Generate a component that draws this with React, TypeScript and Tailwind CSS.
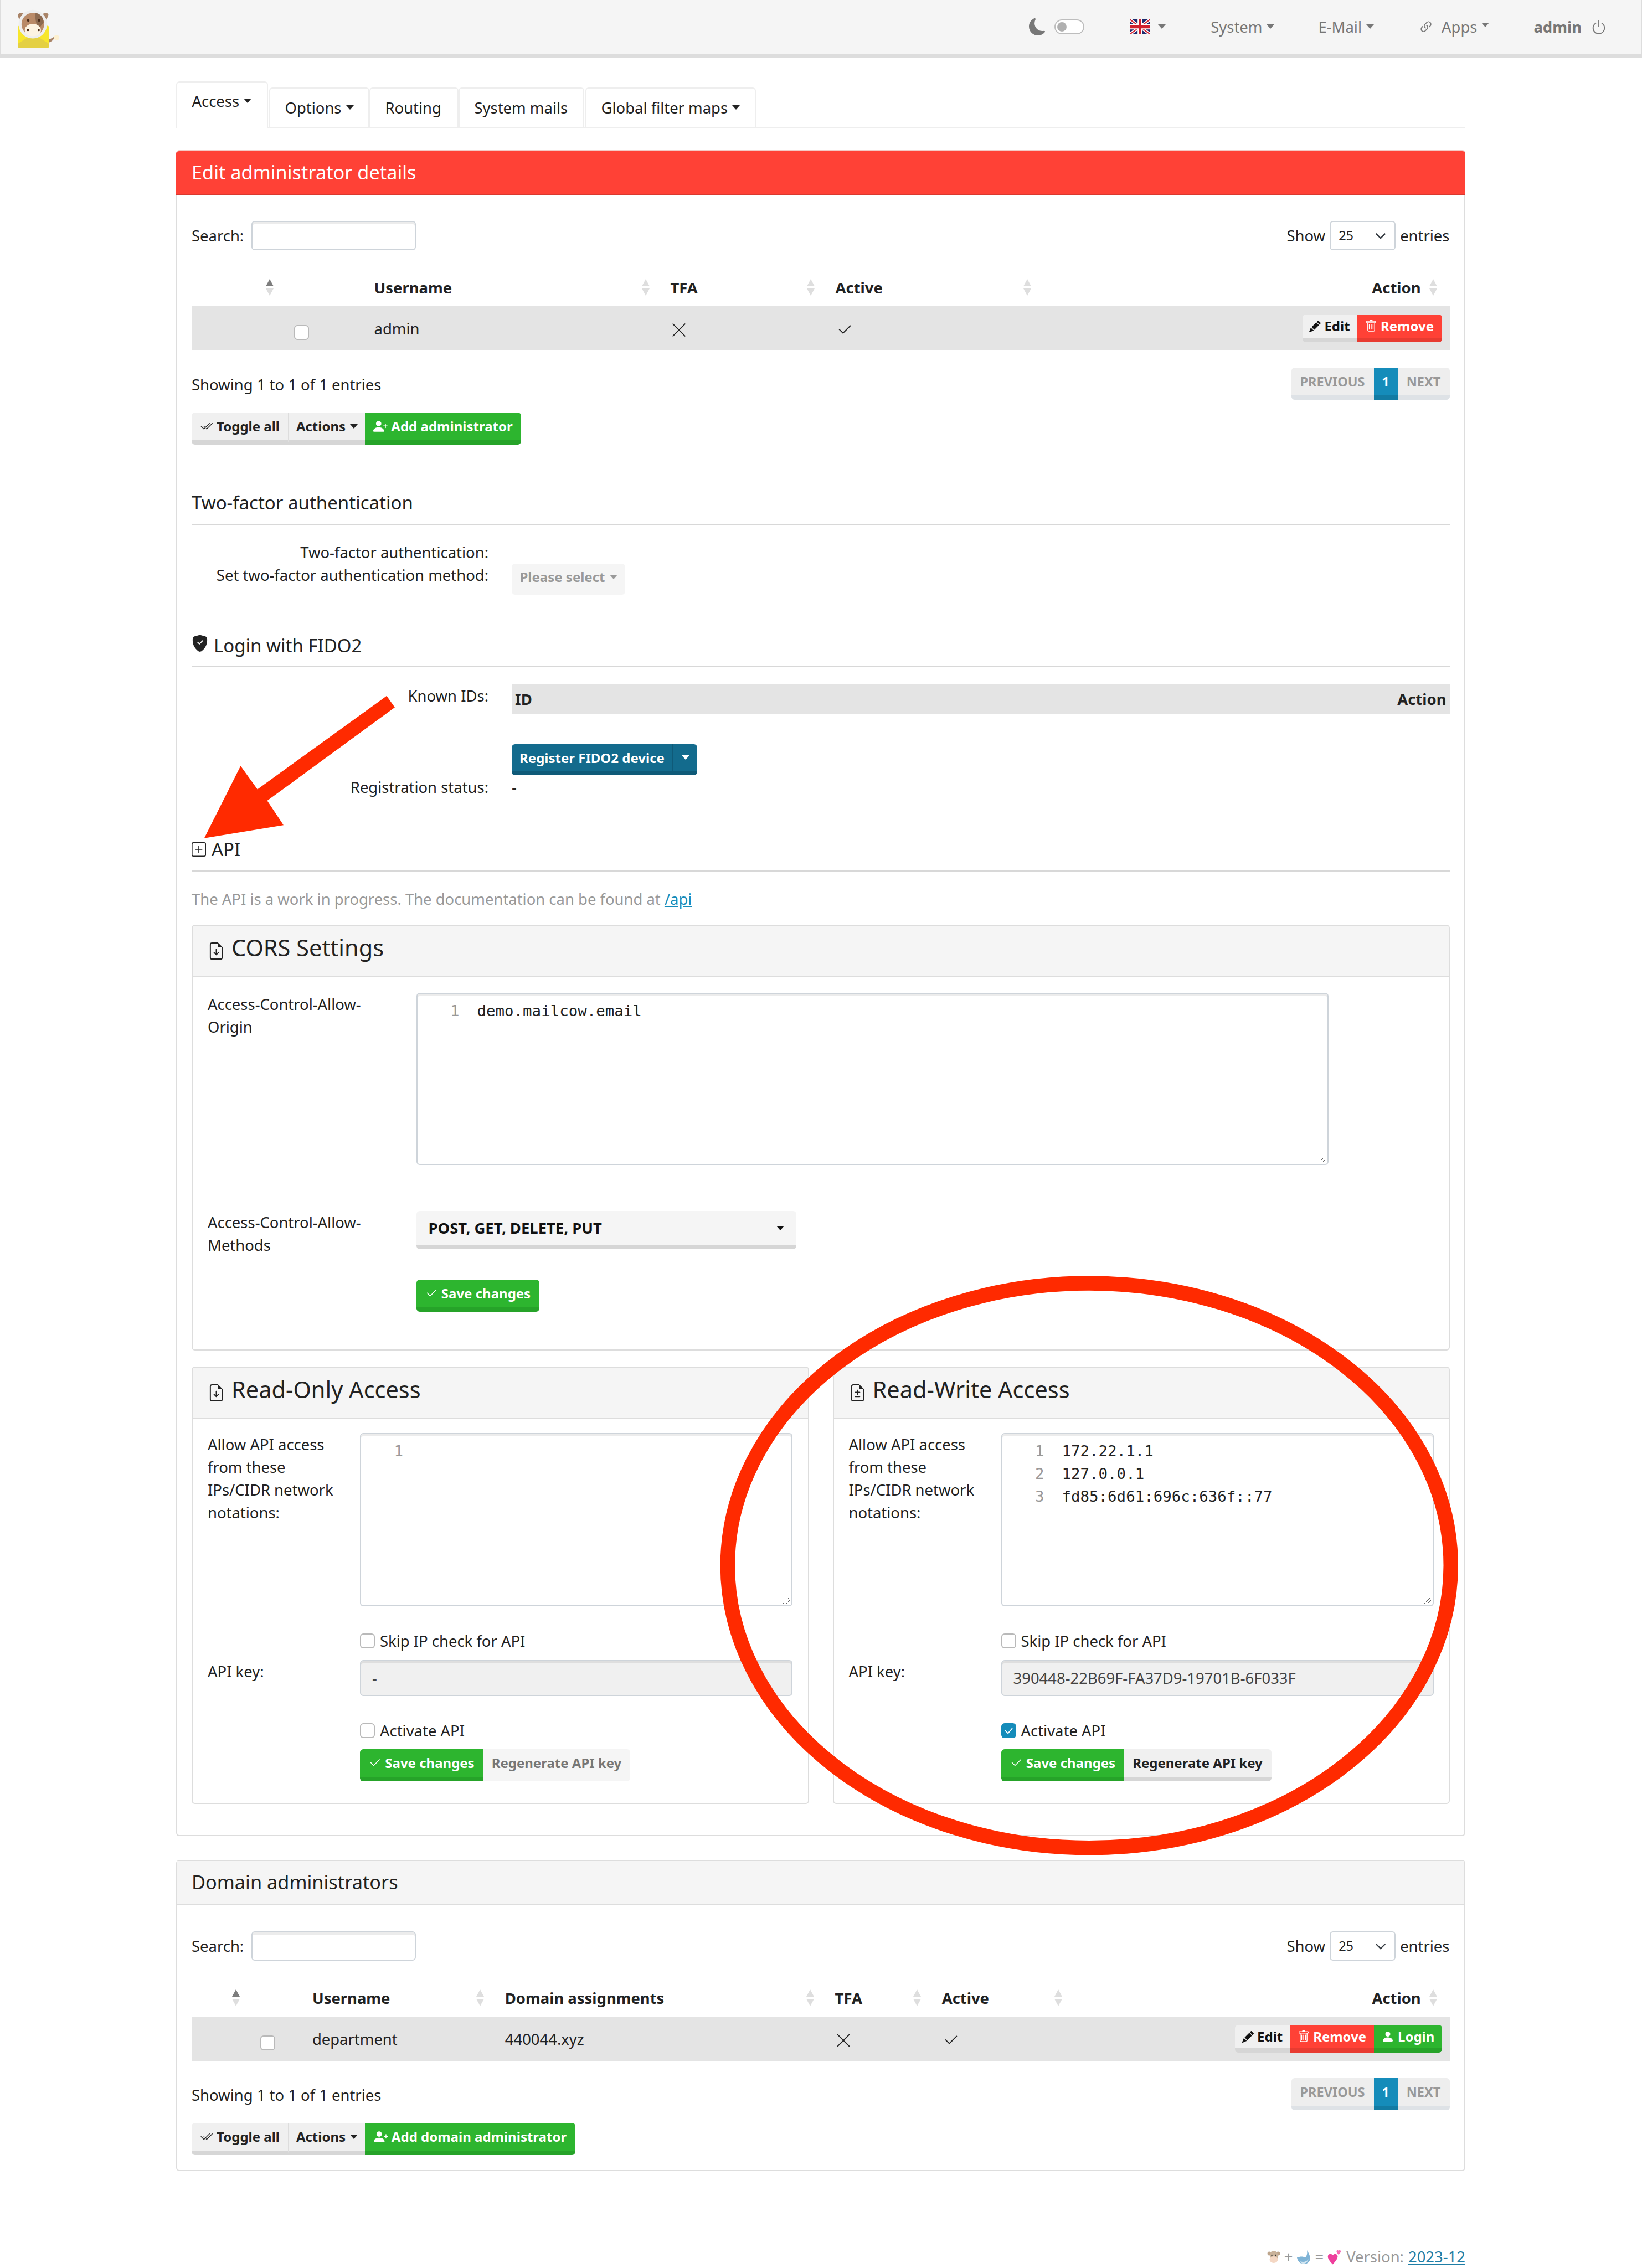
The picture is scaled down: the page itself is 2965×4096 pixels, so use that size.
import type { ReactNode } from "react";
import {
  BsCheck2,
  BsCheck2All,
  BsCheckLg,
  BsFileEarmarkArrowDown,
  BsFileEarmarkDiff,
  BsLink45Deg,
  BsMoonFill,
  BsPencilFill,
  BsPersonFill,
  BsPersonPlusFill,
  BsPlusSquare,
  BsPower,
  BsShieldFillCheck,
  BsTrash,
} from "react-icons/bs";

const Caret = () => (
  <span className="ml-[8px] inline-block h-0 w-0 border-x-[7px] border-t-[8px] border-x-transparent border-t-current align-[0.255em]" />
);

const Sort = ({ active }: { active?: boolean }) => (
  <span className="flex flex-col items-center gap-[4px]">
    <span
      className={
        active
          ? "h-0 w-0 border-x-[7px] border-b-[13px] border-x-transparent border-b-[#7d7d7d]"
          : "h-0 w-0 border-x-[7px] border-b-[13px] border-x-transparent border-b-[#dedede]"
      }
    />
    <span className="h-0 w-0 border-x-[7px] border-t-[13px] border-x-transparent border-t-[#dedede]" />
  </span>
);

const Checkbox = ({ checked }: { checked?: boolean }) =>
  checked ? (
    <span className="flex h-[27px] w-[27px] items-center justify-center rounded-[6px] bg-[#158cba] text-[20px] text-white">
      <BsCheckLg />
    </span>
  ) : (
    <span className="block h-[27px] w-[27px] rounded-[6px] border-2 border-[#b9b9b9] bg-white" />
  );

const MailcowLogo = () => (
  <svg viewBox="33 13 77 76" className="h-[75px] w-[75px]">
    <path d="M37 37c-4-6-3-10-3-12 5-3 12-1 14 4l-4 6c-2-3-4-2-7 2z" fill="#a98468" />
    <path d="M85 37c4-6 5-10 5-12-5-3-12-1-14 4l4 6c2-3 4-2 5 2z" fill="#a98468" />
    <path d="M90 71c4 1 6-1 9-3l2 2c-3 4-7 8-11 8z" fill="#a98468" />
    <circle cx="105" cy="69" r="5" fill="#fdf0cf" />
    <rect x="33.5" y="47" width="57" height="41" rx="2" fill="#f7e62c" />
    <path d="M33.5 80 62 62l28.5 18v6a2 2 0 0 1-2 2h-53a2 2 0 0 1-2-2z" fill="#e4d043" />
    <circle cx="61" cy="44" r="26.5" fill="#eeeeee" />
    <circle cx="61" cy="44" r="21" fill="#b98a68" />
    <path d="M66 23c8 1 15 8 15 18l-8 10c-6-6-8-14-7-28z" fill="#8d6a50" />
    <ellipse cx="61" cy="55" rx="15" ry="11.5" fill="#fdf3e2" />
    <circle cx="52.5" cy="37" r="2.4" fill="#4a2c1a" />
    <circle cx="72.5" cy="37" r="2.4" fill="#4a2c1a" />
    <circle cx="52" cy="55" r="2" fill="#4a2c1a" />
    <circle cx="72" cy="55" r="2" fill="#4a2c1a" />
  </svg>
);

const UkFlag = () => (
  <svg viewBox="0 0 60 40" preserveAspectRatio="none" className="h-[27px] w-[37px]">
    <rect width="60" height="40" fill="#1d2a6d" />
    <path d="M0 0 60 40M60 0 0 40" stroke="#fff" strokeWidth="8" />
    <path d="M0 0 60 40M60 0 0 40" stroke="#d0202e" strokeWidth="3" />
    <path d="M30 0v40M0 20h60" stroke="#fff" strokeWidth="14" />
    <path d="M30 0v40M0 20h60" stroke="#d0202e" strokeWidth="8" />
  </svg>
);

const Navbar = () => (
  <header className="flex h-[105px] items-start justify-between border-x-2 border-b-[8px] border-x-[#dddddd] border-b-[#dddddd] bg-[#f5f5f5]">
    <div className="ml-[30px] mt-[13px]">
      <MailcowLogo />
    </div>
    <nav className="mr-[61px] mt-[28px] flex items-center text-[27.44px] leading-[41px] text-[#777777]">
      <BsMoonFill className="h-[31px] w-[31px] text-[#777777]" />
      <span className="ml-[15px] flex h-[27px] w-[54px] items-center rounded-full border-2 border-[#bdbdbd] bg-white pl-[3px]">
        <span className="h-[17px] w-[17px] rounded-full bg-[#b0b0b0]" />
      </span>
      <span className="ml-[82px] flex items-center">
        <UkFlag />
        <span className="ml-[6px]">
          <Caret />
        </span>
      </span>
      <span className="ml-[81px]">
        System
        <Caret />
      </span>
      <span className="ml-[79px]">
        E-Mail
        <Caret />
      </span>
      <span className="ml-[80px] flex items-center">
        <BsLink45Deg className="mr-[14px] h-[28px] w-[28px]" />
        Apps
        <span className="-mt-[6px]">
          <Caret />
        </span>
      </span>
      <span className="ml-[80px] font-bold">admin</span>
      <BsPower className="ml-[16px] h-[30px] w-[30px]" />
    </nav>
  </header>
);

const tabs = [
  { label: "Options", caret: true, width: "w-[181px] ml-[2px]" },
  { label: "Routing", caret: false, width: "w-[161px]" },
  { label: "System mails", caret: false, width: "w-[227px]" },
  { label: "Global filter maps", caret: true, width: "w-[308px] ml-[2px]" },
];

const Tabs = () => (
  <div className="flex h-[84px] items-end border-b-2 border-b-[#eeeeee]">
    <div className="-mb-[2px] h-[84px] w-[166px] whitespace-nowrap rounded-t-[6px] border-x-2 border-t-2 border-[#eeeeee] bg-white pl-[27px] pt-[13px] text-[27.44px] leading-[41px]">
      Access
      <Caret />
    </div>
    {tabs.map((t) => (
      <div
        key={t.label}
        className={`h-[71px] whitespace-nowrap rounded-t-[6px] border-x-2 border-t-2 border-[#eeeeee] pl-[27px] pt-[14px] text-[27.44px] leading-[41px] ${t.width}`}
      >
        {t.label}
        {t.caret && <Caret />}
      </div>
    ))}
  </div>
);

const Btn = ({
  tone,
  className,
  children,
}: {
  tone: "default" | "green" | "red" | "gray" | "muted" | "white";
  className?: string;
  children: ReactNode;
}) => {
  const tones = {
    default: "bg-[#f0f0f0] border-b-[#d6d6d6] text-[#222222]",
    gray: "bg-[#f0f0f0] border-b-[#d6d6d6] text-[#222222]",
    muted: "bg-[#f5f5f5] border-b-[#f5f5f5] text-[#777777]",
    white: "bg-[#f0f0f0] border-b-[#d6d6d6] text-[#111111]",
    green: "bg-[#2db52f] border-b-[#26a329] text-white",
    red: "bg-[#ff4136] border-b-[#e83b31] text-white",
  };
  return (
    <span
      className={`inline-flex items-center justify-center whitespace-nowrap border-b-[8px] text-[24px] font-bold leading-none ${tones[tone]} ${className ?? ""}`}
    >
      {children}
    </span>
  );
};

const SearchBar = () => (
  <div className="flex h-[53px] items-center justify-between">
    <div className="flex items-center">
      <span>Search:</span>
      <span className="ml-[14px] block h-[53px] w-[297px] rounded-[6px] border-2 border-[#ced4da] bg-white shadow-[inset_0_4px_0_rgba(0,0,0,0.075)]" />
    </div>
    <div className="flex items-center">
      <span>Show</span>
      <span className="mx-[8px] flex h-[53px] w-[119px] items-center justify-between rounded-[6px] border-2 border-[#ced4da] bg-white pl-[14px] pr-[14px] text-[23.52px]">
        25
        <svg viewBox="0 0 16 16" className="h-[22px] w-[22px]" fill="none" stroke="#343a40" strokeWidth="1.6">
          <path d="m2 5 6 6 6-6" />
        </svg>
      </span>
      <span>entries</span>
    </div>
  </div>
);

const Pagination = () => (
  <div className="flex h-[58px] overflow-hidden rounded-[6px] text-[23.52px] font-bold">
    <span className="flex w-[149px] items-center justify-center border-b-[8px] border-b-[#dee2e6] bg-[#eeeeee] text-[#999999]">
      PREVIOUS
    </span>
    <span className="flex w-[43px] items-center justify-center border-b-[8px] border-b-[#127ba3] bg-[#158cba] text-white">
      1
    </span>
    <span className="flex w-[94px] items-center justify-center border-b-[8px] border-b-[#dee2e6] bg-[#eeeeee] text-[#999999]">
      NEXT
    </span>
  </div>
);

const Footbar = () => (
  <div className="mt-[31px] flex h-[58px] items-center justify-between">
    <span className="pt-[3px]">Showing 1 to 1 of 1 entries</span>
    <Pagination />
  </div>
);

const HeadCell = ({ label, sort = true, active }: { label?: string; sort?: boolean; active?: boolean }) => (
  <div className="flex items-center justify-between pl-[16px] pr-[22px] font-bold">
    <span>{label}</span>
    {sort && <Sort active={active} />}
  </div>
);

const ActionHead = () => (
  <div className="flex items-center justify-end pr-[23px] font-bold">
    <span className="mr-[15px]">Action</span>
    <Sort />
  </div>
);

const RowCheck = () => (
  <div className="flex items-center pl-[15px] pt-[14px]">
    <Checkbox />
  </div>
);

const Mark = ({ type }: { type: "x" | "check" }) =>
  type === "x" ? (
    <div className="flex items-center pl-[18px] pt-[6px]">
      <svg viewBox="0 0 16 16" className="h-[26px] w-[26px]" fill="none" stroke="#222222" strokeWidth="1.2">
        <path d="m1 1 14 14M15 1 1 15" />
      </svg>
    </div>
  ) : (
    <div className="flex items-center pl-[17px] pt-[6px]">
      <BsCheck2 className="h-[30px] w-[30px]" />
    </div>
  );

const EditBtn = ({ wide }: { wide?: boolean }) => (
  <Btn tone="white" className={wide ? "h-[50px] w-[100px] rounded-l-[6px]" : "h-[50px] w-[99px] rounded-l-[6px]"}>
    <BsPencilFill className="mr-[6px] h-[21px] w-[21px]" />
    Edit
  </Btn>
);

const AdminTable = () => (
  <>
    <div className="mt-[1px] grid h-[100px] grid-cols-[169.5px_144px_535px_298px_391px_734px] items-center pt-[32px]">
      <HeadCell active />
      <div />
      <HeadCell label="Username" />
      <HeadCell label="TFA" />
      <HeadCell label="Active" />
      <ActionHead />
    </div>
    <div className="grid h-[80px] grid-cols-[169.5px_144px_535px_298px_391px_734px] bg-[#e4e4e4]">
      <div />
      <RowCheck />
      <div className="flex items-center pl-[16px]">admin</div>
      <Mark type="x" />
      <Mark type="check" />
      <div className="flex items-start justify-end pr-[14px] pt-[15px]">
        <EditBtn />
        <Btn tone="red" className="h-[50px] w-[153px] rounded-r-[6px]">
          <BsTrash className="mr-[6px] h-[22px] w-[22px]" />
          Remove
        </Btn>
      </div>
    </div>
  </>
);

const DomainTable = () => (
  <>
    <div className="mt-[1px] grid h-[100px] grid-cols-[108.8px_93.1px_347.9px_595.8px_193.1px_255.8px_677.2px] items-center pt-[32px]">
      <HeadCell active />
      <div />
      <HeadCell label="Username" />
      <HeadCell label="Domain assignments" />
      <HeadCell label="TFA" />
      <HeadCell label="Active" />
      <ActionHead />
    </div>
    <div className="grid h-[80px] grid-cols-[108.8px_93.1px_347.9px_595.8px_193.1px_255.8px_677.2px] bg-[#e4e4e4]">
      <div />
      <RowCheck />
      <div className="flex items-center pl-[16px]">department</div>
      <div className="flex items-center pl-[16px]">440044.xyz</div>
      <Mark type="x" />
      <Mark type="check" />
      <div className="flex items-start justify-end pr-[14px] pt-[15px]">
        <EditBtn wide />
        <Btn tone="red" className="h-[50px] w-[151px]">
          <BsTrash className="mr-[6px] h-[22px] w-[22px]" />
          Remove
        </Btn>
        <Btn tone="green" className="h-[50px] w-[123px] rounded-r-[6px]">
          <BsPersonFill className="mr-[6px] h-[24px] w-[24px]" />
          Login
        </Btn>
      </div>
    </div>
  </>
);

const TableActions = ({ addLabel, addClass }: { addLabel: string; addClass: string }) => (
  <div className="mt-[23px] flex h-[58px]">
    <Btn tone="default" className="h-[58px] w-[176px] rounded-l-[6px] border-r-2 border-r-[#dddddd]">
      <BsCheck2All className="mr-[7px] h-[23px] w-[23px]" />
      Toggle all
    </Btn>
    <Btn tone="default" className="h-[58px] w-[137px]">
      Actions
      <Caret />
    </Btn>
    <Btn tone="green" className={`h-[58px] rounded-r-[6px] ${addClass}`}>
      <BsPersonPlusFill className="mr-[6px] h-[26px] w-[26px]" />
      {addLabel}
    </Btn>
  </div>
);

const SectionHead = ({ className, children }: { className: string; children: ReactNode }) => (
  <div className={`flex items-center border-b-2 border-b-[#d8d8d8] text-[33px] leading-[48px] ${className}`}>
    {children}
  </div>
);

const Resize = () => (
  <svg viewBox="0 0 14 14" className="absolute bottom-[2px] right-[2px] h-[14px] w-[14px]" stroke="#666666" strokeWidth="1">
    <path d="M1 13 13 1M7 13l6-6" />
  </svg>
);

const CodeBox = ({ lines, className }: { lines: string[]; className: string }) => (
  <div
    className={`relative rounded-[6px] border-2 border-[#ced4da] bg-white pt-[10px] font-['DejaVu_Sans_Mono',monospace] text-[27.44px] leading-[41px] shadow-[inset_0_4px_0_rgba(0,0,0,0.075)] ${className}`}
  >
    {lines.map((l, i) => (
      <div key={i} className="flex">
        <span className="w-[76px] text-right text-[#999999]">{i + 1}</span>
        <span className="ml-[32px]">{l}</span>
      </div>
    ))}
    <Resize />
  </div>
);

const CardHead = ({ icon, title }: { icon: ReactNode; title: string }) => (
  <div className="flex h-[92px] items-center border-b-2 border-b-[#dddddd] bg-[#f5f5f5] pl-[27px] text-[41.5px] leading-[56px]">
    {icon}
    <span className="mb-[12px] ml-[12px]">{title}</span>
  </div>
);

const AccessCard = ({
  title,
  icon,
  lines,
  apiKey,
  active,
  className,
}: {
  title: string;
  icon: ReactNode;
  lines: string[];
  apiKey: string;
  active?: boolean;
  className: string;
}) => (
  <section className={`h-[790px] overflow-hidden rounded-[6px] border-2 border-[#dddddd] ${className}`}>
    <CardHead icon={icon} title={title} />
    <div className="grid grid-cols-[275px_781px] pl-[27px] pt-[26px]">
      <div className="leading-[41px]">
        Allow API access
        <br />
        from these
        <br />
        IPs/CIDR network
        <br />
        notations:
      </div>
      <CodeBox lines={lines} className="h-[313px]" />
      <div />
      <label className="mt-[42px] flex h-[41px] items-center">
        <Checkbox />
        <span className="ml-[9px]">Skip IP check for API</span>
      </label>
      <div className="mt-[14px]">API key:</div>
      <div className="mt-[14px] flex h-[65px] items-center rounded-[6px] border-2 border-[#ced4da] bg-[#f0f0f0] pl-[20px] text-[#444444] shadow-[inset_0_4px_0_rgba(0,0,0,0.075)]">
        {apiKey}
      </div>
      <div />
      <label className="mt-[42px] flex h-[41px] items-center">
        <Checkbox checked={active} />
        <span className="ml-[9px]">Activate API</span>
      </label>
      <div />
      <div className="mt-[13px] flex">
        <Btn tone="green" className="h-[58px] w-[222px] rounded-l-[6px]">
          <BsCheck2 className="mr-[6px] h-[24px] w-[24px]" />
          Save changes
        </Btn>
        {active ? (
          <Btn tone="gray" className="h-[58px] w-[266px] rounded-r-[6px]">
            Regenerate API key
          </Btn>
        ) : (
          <Btn tone="muted" className="h-[58px] w-[266px] rounded-r-[6px]">
            Regenerate API key
          </Btn>
        )}
      </div>
    </div>
  </section>
);

const CowEmoji = () => (
  <svg viewBox="0 0 26 26" className="h-[28px] w-[26px]">
    <circle cx="5" cy="7" r="3.4" fill="#bda58c" />
    <circle cx="21" cy="7" r="3.4" fill="#bda58c" />
    <rect x="6" y="2" width="14" height="20" rx="7" fill="#c9b29a" />
    <ellipse cx="13" cy="18" rx="7.5" ry="6" fill="#f4d7c4" />
    <circle cx="9.5" cy="10" r="1.2" fill="#333333" />
    <circle cx="16.5" cy="10" r="1.2" fill="#333333" />
  </svg>
);

const WhaleEmoji = () => (
  <svg viewBox="0 0 28 28" className="h-[28px] w-[28px]">
    <path d="M2 15c6-2 11-2 15 0 3-3 4-8 3-13 3 4 5 9 6 14 0 6-5 11-11 11C8 27 3 22 2 15z" fill="#7fb4d6" />
    <path d="M8 22c5 2 11 1 15-4-2 6-7 9-11 8-2 0-3-2-4-4z" fill="#d3e6f1" />
  </svg>
);

const HeartsEmoji = () => (
  <svg viewBox="0 0 28 30" className="h-[30px] w-[27px]">
    <path d="M11 29C4 22 1 17 2 13c1-4 6-5 9-1 3-4 8-3 9 1 1 4-3 10-9 16z" fill="#ee3f9d" />
    <path d="M22 11c-3-3-4-5-4-7 1-2 3-2 4 0 1-2 3-2 4 0 0 2-1 4-4 7z" fill="#f768b4" />
  </svg>
);

const Overlay = () => (
  <svg viewBox="0 0 3024 4178" className="pointer-events-none absolute left-0 top-0 h-[4096px] w-[2965px]">
    <path d="M712 1282 727 1303 492 1475 522 1520 376 1544 443 1411 474 1454z" fill="#ff2a00" />
    <ellipse cx="2006" cy="2884" rx="666" ry="520" fill="none" stroke="#ff2a00" strokeWidth="27" />
  </svg>
);

export default function App() {
  return (
    <div className="relative font-['Noto_Sans',sans-serif] text-[27.44px] leading-[41px] text-[#222222]">
      <Navbar />
      <main className="ml-[317.5px] w-[2328.5px] pt-[42px]">
        <Tabs />
        <section className="mt-[39.5px] rounded-[6px] border-x-2 border-b-2 border-[#dddddd] pb-[56px]">
          <div className="-mx-[2px] flex h-[81px] items-center rounded-t-[6px] border-b-2 border-t-2 border-b-[#d9392f] border-t-[#f3c9c5] bg-[#ff4136] pb-[1px] pl-[28.5px] text-[34.3px] text-white">
            Edit administrator details
          </div>
          <div className="px-[26.5px] pt-[47.5px]">
            <SearchBar />
            <AdminTable />
            <Footbar />
            <TableActions addLabel="Add administrator" addClass="w-[282px]" />

            <SectionHead className="mt-[66px] h-[79px]">Two-factor authentication</SectionHead>
            <div className="mt-[29px] grid grid-cols-[536px_1fr] gap-x-[42px]">
              <div className="text-right">Two-factor authentication:</div>
              <div />
              <div className="text-right">Set two-factor authentication method:</div>
              <div>
                <Btn tone="muted" className="h-[56px] w-[205px] rounded-[6px] border-b-[#d6d6d6] bg-[#eeeeee] !text-[#999999]">
                  Please select
                  <Caret />
                </Btn>
              </div>
            </div>

            <SectionHead className="mt-[57px] h-[74px] pb-[3px]">
              <BsShieldFillCheck className="mb-[8px] mr-[10px] h-[30px] w-[30px]" />
              Login with FIDO2
            </SectionHead>
            <div className="mt-[30px] grid grid-cols-[536px_1fr] gap-x-[42px]">
              <div className="pt-[1px] text-right">Known IDs:</div>
              <div className="flex h-[54px] items-center justify-between bg-[#e4e4e4] px-[6px] font-bold">
                <span>ID</span>
                <span>Action</span>
              </div>
              <div />
              <div className="mt-[55px] flex h-[56px]">
                <span className="flex w-[292px] items-center justify-center rounded-l-[6px] border-b-[8px] border-r-2 border-b-[#0f5a78] border-r-[#0f5a78] bg-[#136b8d] text-[24px] font-bold text-white">
                  Register FIDO2 device
                </span>
                <span className="flex w-[43px] items-center justify-center rounded-r-[6px] border-b-[8px] border-b-[#0f5a78] bg-[#136b8d] pr-[8px] text-white">
                  <Caret />
                </span>
              </div>
              <div className="mt-[1px] text-right">Registration status:</div>
              <div className="mt-[1px]">-</div>
            </div>

            <SectionHead className="mt-[56px] h-[76px] pb-[3px]">
              <BsPlusSquare className="mr-[10px] h-[26px] w-[26px]" />
              API
            </SectionHead>
            <p className="mt-[29px] text-[#999999]">
              The API is a work in progress. The documentation can be found at{" "}
              <span className="text-[#158cba] underline">/api</span>
            </p>

            <section className="mt-[26px] h-[769px] overflow-hidden rounded-[6px] border-2 border-[#dddddd]">
              <CardHead icon={<BsFileEarmarkArrowDown className="h-[31px] w-[31px]" />} title="CORS Settings" />
              <div className="grid grid-cols-[376.5px_1fr] pl-[27px] pt-[29px]">
                <div>
                  Access-Control-Allow-
                  <br />
                  Origin
                </div>
                <CodeBox lines={["demo.mailcow.email"]} className="h-[311px] w-[1647px]" />
                <div className="mt-[83px]">
                  Access-Control-Allow-
                  <br />
                  Methods
                </div>
                <div className="mt-[83px] flex h-[69px] w-[686px] items-center justify-between rounded-[6px] border-b-[8px] border-b-[#d6d6d6] bg-[#f5f5f5] pl-[22px] pr-[22px] font-bold text-[#111111]">
                  POST, GET, DELETE, PUT
                  <Caret />
                </div>
                <div />
                <div className="mt-[42px]">
                  <Btn tone="green" className="h-[58px] w-[222px] rounded-[6px]">
                    <BsCheck2 className="mr-[6px] h-[24px] w-[24px]" />
                    Save changes
                  </Btn>
                </div>
              </div>
            </section>

            <div className="mt-[29px] flex justify-between">
              <AccessCard
                className="w-[1115px]"
                icon={<BsFileEarmarkArrowDown className="h-[31px] w-[31px]" />}
                title="Read-Only Access"
                lines={[""]}
                apiKey="-"
              />
              <AccessCard
                className="w-[1114px]"
                icon={<BsFileEarmarkDiff className="h-[31px] w-[31px]" />}
                title="Read-Write Access"
                lines={["172.22.1.1", "127.0.0.1", "fd85:6d61:696c:636f::77"]}
                apiKey="390448-22B69F-FA37D9-19701B-6F033F"
                active
              />
            </div>
          </div>
        </section>

        <section className="mt-[43px] rounded-[6px] border-2 border-[#dddddd] pb-[27px]">
          <div className="flex h-[80px] items-center border-b-2 border-b-[#dddddd] bg-[#f5f5f5] pb-[3px] pl-[26.5px] text-[34.3px]">
            Domain administrators
          </div>
          <div className="px-[26.5px] pt-[47px]">
            <SearchBar />
            <DomainTable />
            <Footbar />
            <TableActions addLabel="Add domain administrator" addClass="w-[380px]" />
          </div>
        </section>

        <footer className="mt-[134px] flex items-center justify-end text-[#999999]">
          <CowEmoji />
          <span className="mx-[6px]">+</span>
          <WhaleEmoji />
          <span className="mx-[6px]">=</span>
          <HeartsEmoji />
          <span className="ml-[8px]">Version: </span>
          <span className="ml-[8px] text-[#1f7ea6] underline">2023-12</span>
        </footer>
      </main>
      <Overlay />
    </div>
  );
}
